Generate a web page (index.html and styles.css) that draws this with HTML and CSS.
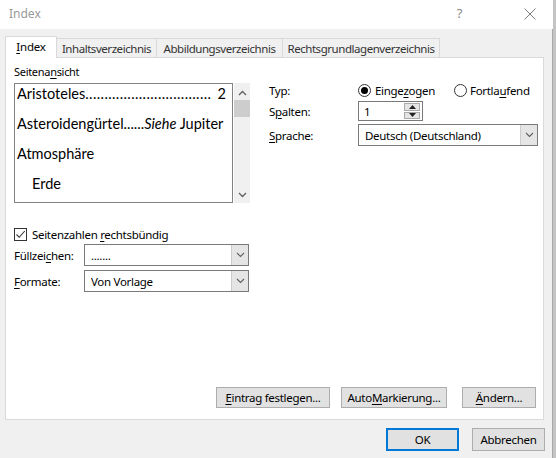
FILE: index.html
```html
<!DOCTYPE html>
<html lang="de">
<head>
<meta charset="utf-8">
<title>Index</title>
<link rel="stylesheet" href="styles.css">
</head>
<body>
<div class="window">
  <div class="titlebar">
    <span class="title">Index</span>
    <span class="help">?</span>
    <svg class="close" width="12" height="12" viewBox="0 0 12 12"><path d="M0.5 0.5 L11.5 11.5 M11.5 0.5 L0.5 11.5" stroke="#7a7a7a" stroke-width="1" fill="none"/></svg>
  </div>

  <div class="tabs">
    <div class="tab tab-index active"><u>I</u>ndex</div>
    <div class="tab tab-inhalt">Inhaltsverzeichnis</div>
    <div class="tab tab-abb">Abbildungsverzeichnis</div>
    <div class="tab tab-recht">Rechtsgrundlagenverzeichnis</div>
  </div>

  <div class="panel">
    <div class="cols">
      <div class="left">
        <div class="caption">Seitena<u>n</u>sicht</div>
        <div class="preview-row">
          <div class="preview">
            <div class="entry leader"><span>Aristoteles<span class="dots">.................................</span></span><span class="page">2</span></div>
            <div class="entry">Asteroidengürtel......<i>Siehe</i> Jupiter</div>
            <div class="entry">Atmosphäre</div>
            <div class="entry sub">Erde</div>
          </div>
          <div class="scrollbar">
            <svg class="sb-arrow" width="9" height="6" viewBox="0 0 9 6"><path d="M1 5 L4.5 1.5 L8 5" stroke="#606060" stroke-width="1.3" fill="none"/></svg>
            <div class="sb-thumb"></div>
            <div class="sb-track"></div>
            <svg class="sb-arrow" width="9" height="6" viewBox="0 0 9 6"><path d="M1 1 L4.5 4.5 L8 1" stroke="#606060" stroke-width="1.3" fill="none"/></svg>
          </div>
        </div>

        <label class="check-row">
          <span class="checkbox"><svg width="11" height="11" viewBox="0 0 11 11"><path d="M1.5 5.5 L4.2 8.3 L9.8 2" stroke="#333" stroke-width="1.1" fill="none"/></svg></span>
          <span>Seitenzahlen <u>r</u>echtsbündig</span>
        </label>

        <div class="field-row first">
          <span class="field-label">Füllzei<u>c</u>hen:</span>
          <div class="combo combo-left"><span class="combo-text">.......</span><span class="combo-btn"><svg width="9" height="6" viewBox="0 0 9 6"><path d="M1 1 L4.5 4.5 L8 1" stroke="#606060" stroke-width="1.1" fill="none"/></svg></span></div>
        </div>
        <div class="field-row">
          <span class="field-label"><u>F</u>ormate:</span>
          <div class="combo combo-left"><span class="combo-text">Von Vorlage</span><span class="combo-btn"><svg width="9" height="6" viewBox="0 0 9 6"><path d="M1 1 L4.5 4.5 L8 1" stroke="#606060" stroke-width="1.1" fill="none"/></svg></span></div>
        </div>
      </div>

      <div class="right">
        <div class="rrow typ">
          <span class="rlabel">Typ:</span>
          <span class="radio checked"></span><span class="rtext">Einge<u>z</u>ogen</span>
          <span class="radio second"></span><span class="rtext">Fortla<u>u</u>fend</span>
        </div>
        <div class="rrow spalten">
          <span class="rlabel">S<u>p</u>alten:</span>
          <div class="spinner">
            <span class="spin-text">1</span>
            <span class="spin-btns">
              <span class="spin-btn"><svg width="7" height="4" viewBox="0 0 7 4"><path d="M0 4 L3.5 0 L7 4 Z" fill="#222"/></svg></span>
              <span class="spin-btn"><svg width="7" height="4" viewBox="0 0 7 4"><path d="M0 0 L3.5 4 L7 0 Z" fill="#222"/></svg></span>
            </span>
          </div>
        </div>
        <div class="rrow sprache">
          <span class="rlabel"><u>S</u>prache:</span>
          <div class="combo combo-right"><span class="combo-text">Deutsch (Deutschland)</span><span class="combo-btn"><svg width="9" height="6" viewBox="0 0 9 6"><path d="M1 1 L4.5 4.5 L8 1" stroke="#606060" stroke-width="1.1" fill="none"/></svg></span></div>
        </div>
      </div>
    </div>

    <div class="actions">
      <button class="btn btn-eintrag"><u>E</u>intrag festlegen...</button>
      <button class="btn btn-auto">Auto<u>M</u>arkierung...</button>
      <button class="btn btn-aendern"><u>Ä</u>ndern...</button>
    </div>
  </div>

  <div class="footer">
    <button class="btn btn-foot default">OK</button>
    <button class="btn btn-foot">Abbrechen</button>
  </div>
</div>
</body>
</html>
```

FILE: styles.css
```css
* { box-sizing: border-box; }

html, body {
  margin: 0;
  padding: 0;
}

body {
  width: 556px;
  height: 458px;
  overflow: hidden;
  background: #f0f0f0;
  font-family: "Noto Sans", "Open Sans", sans-serif;
  font-size: 11.5px;
  letter-spacing: -0.3px;
  color: #000;
}

u { text-decoration-thickness: 1px; text-underline-offset: 2px; }

.window {
  width: 556px;
  height: 458px;
  border-right: 3px solid #c4c4c4;
  box-shadow: inset -1px 0 0 #aaaaaa;
}

.titlebar {
  height: 29px;
  background: #fff;
  display: flex;
  align-items: center;
  padding-left: 9px;
}

.title {
  color: #999;
  font-size: 12px;
  letter-spacing: 0;
  flex: 1;
  margin-top: -2px;
}

.help {
  color: #888;
  font-size: 13px;
  margin-right: 62px;
  margin-top: -3px;
}

.close {
  margin-right: 17px;
  margin-top: -1px;
}

/* tabs */
.tabs {
  display: flex;
  align-items: flex-end;
  margin-top: 7px;
  margin-left: 5px;
  height: 21px;
  position: relative;
  z-index: 1;
}

.tab {
  height: 19px;
  border: 1px solid #d9d9d9;
  border-bottom: none;
  border-left: none;
  background: #f0f0f0;
  color: #333;
  display: flex;
  align-items: center;
  justify-content: center;
  white-space: nowrap;
  letter-spacing: -0.45px;
}

.tab.active {
  height: 22px;
  margin-bottom: -1px;
  background: #fff;
  color: #000;
  border-left: 1px solid #d9d9d9;
  align-items: flex-start;
  padding-top: 2px;
  letter-spacing: -0.2px;
}

.tab-index { width: 52px; }
.tab-inhalt { width: 100px; }
.tab-abb { width: 126px; }
.tab-recht { width: 157px; }

/* panel */
.panel {
  margin-left: 5px;
  width: 539px;
  height: 363px;
  background: #fff;
  border: 1px solid #d9d9d9;
  padding: 6px 7px 0 8px;
  display: flex;
  flex-direction: column;
}

.cols { display: flex; }

.left { width: 236px; }

.caption {
  line-height: 16px;
  height: 16px;
  font-size: 11px;
  margin-bottom: 3px;
}

.preview-row {
  display: flex;
  gap: 1px;
  height: 120px;
}

.preview {
  width: 219px;
  height: 120px;
  border: 1px solid #828282;
  padding: 0 6px 0 2px;
  font-family: "Lato", "Open Sans", sans-serif;
  font-size: 14.5px;
  letter-spacing: 0;
  overflow: hidden;
}

.entry {
  line-height: 20px;
  height: 20px;
  margin-bottom: 10px;
  white-space: nowrap;
}

.entry.leader {
  display: flex;
  justify-content: space-between;
}

.dots { letter-spacing: 0.4px; }

.entry.sub { padding-left: 15px; }

.scrollbar {
  width: 16px;
  height: 120px;
  background: #f0f0f0;
  display: flex;
  flex-direction: column;
  align-items: center;
  padding: 7px 0 5px;
}

.sb-thumb {
  width: 16px;
  height: 17px;
  background: #cdcdcd;
  margin-top: 4px;
}

.sb-track { flex: 1; }

.check-row {
  display: flex;
  align-items: center;
  height: 16px;
  margin-top: 23px;
  gap: 5px;
}

.checkbox {
  width: 13px;
  height: 13px;
  border: 1px solid #333;
  display: flex;
  align-items: center;
  justify-content: center;
  background: #fff;
}

.field-row {
  display: flex;
  align-items: center;
  margin-top: 4px;
}

.field-row.first { margin-top: 2px; }

.field-label { width: 70px; }

.combo {
  height: 22px;
  border: 1px solid #7a7a7a;
  display: flex;
  align-items: stretch;
  background: #fff;
}

.combo-left { width: 165px; }
.combo-right { width: 180px; height: 22px; }

.combo-text {
  flex: 1;
  padding-left: 6px;
  display: flex;
  align-items: center;
  white-space: nowrap;
}

.combo-btn {
  width: 17px;
  background: #e5e5e5;
  border-left: 1px solid #cccccc;
  display: flex;
  align-items: center;
  justify-content: center;
}

/* right column */
.right {
  margin-left: 19px;
  padding-top: 18px;
}

.rrow {
  display: flex;
  align-items: center;
}

.typ { height: 16px; }
.spalten { margin-top: 3px; }
.sprache { margin-top: 3px; }

.rlabel { width: 89px; }

.radio {
  width: 13px;
  height: 13px;
  border: 1px solid #333;
  border-radius: 50%;
  background: #fff;
  margin-right: 4px;
  position: relative;
}

.radio.checked::after {
  content: "";
  position: absolute;
  left: 2px;
  top: 2px;
  width: 7px;
  height: 7px;
  border-radius: 50%;
  background: #000;
}

.radio.second { margin-left: 19px; margin-right: 3px; }

.spinner {
  width: 65px;
  height: 20px;
  border: 1px solid #7a7a7a;
  display: flex;
  background: #fff;
}

.spin-text {
  flex: 1;
  padding-left: 5px;
  display: flex;
  align-items: center;
}

.spin-btns {
  width: 16px;
  margin: 1px 2px 1px 0;
  display: flex;
  flex-direction: column;
  gap: 1px;
}

.spin-btn {
  flex: 1;
  background: #e5e5e5;
  border: 1px solid #aaa;
  display: flex;
  align-items: center;
  justify-content: center;
}

/* buttons */
.actions {
  margin-top: auto;
  margin-bottom: 11px;
  display: flex;
  justify-content: flex-end;
}

.btn {
  font-family: "Noto Sans", "Open Sans", sans-serif;
  font-size: 11.5px;
  letter-spacing: -0.3px;
  color: #000;
  background: #e1e1e1;
  border: 1px solid #adadad;
  height: 21px;
  padding: 0;
  display: flex;
  align-items: center;
  justify-content: center;
  white-space: nowrap;
}

.btn-eintrag { width: 114px; }
.btn-auto { width: 106px; margin-left: 11px; }
.btn-aendern { width: 74px; margin-left: 15px; }

.footer {
  display: flex;
  justify-content: flex-end;
  gap: 13px;
  padding-right: 8px;
  margin-top: 8px;
}

.btn-foot { width: 73px; height: 23px; }

.btn-foot.default {
  border: 2px solid #0078d7;
}
```
